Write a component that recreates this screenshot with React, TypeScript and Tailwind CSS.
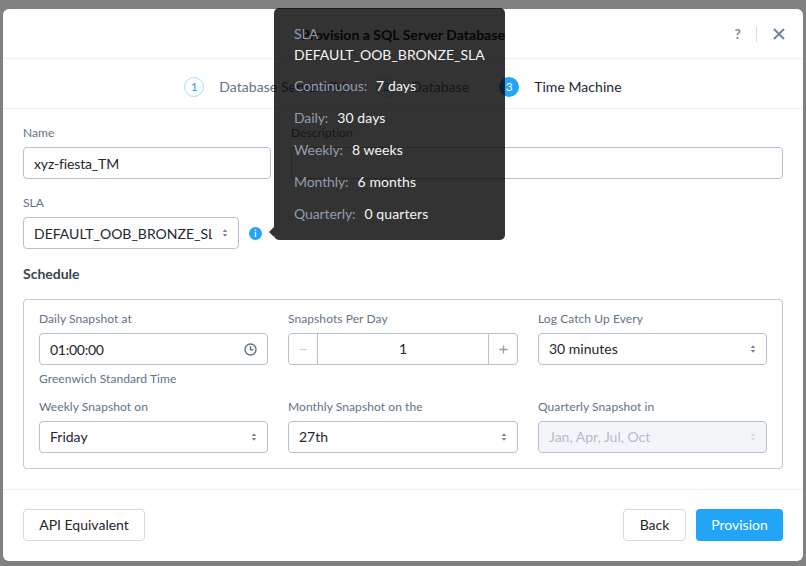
import React from "react";

const Updown = ({ light = false }: { light?: boolean }) => (
  <svg width="6" height="10" viewBox="0 0 6 10" className="shrink-0">
    <path d="M3 1.2 L5.3 4 H0.7 Z M3 8.8 L0.7 6 H5.3 Z" fill={light ? "#d3d9e2" : "#76849a"} />
  </svg>
);

const Label = ({ children }: { children: React.ReactNode }) => (
  <div className="text-[12px] leading-[14px] text-[#627386] tracking-[0.08px]">{children}</div>
);

const Select = ({ value, disabled = false }: { value: string; disabled?: boolean }) => (
  <div
    className={`mt-[7px] flex h-[32px] items-center justify-between rounded-[4px] border border-[#b9c0d0] pl-[10px] pr-[10px] text-[14px] ${
      disabled ? "bg-[#f3f5f8] text-[#b4bdca]" : "bg-white text-[#22272e]"
    }`}
  >
    <span className="mb-[2px]">{value}</span>
    <Updown light={disabled} />
  </div>
);

const Step = ({ n, label, active = false }: { n: number; label: string; active?: boolean }) => (
  <div className="flex items-center gap-[15px]">
    <div
      className={`flex h-[20px] w-[20px] items-center justify-center rounded-full text-[12px] ${
        active ? "bg-[#22a5f7] text-white" : "border border-[#a8dcfc] text-[#22a5f7]"
      }`}
    >
      {n}
    </div>
    <span className={`text-[14px] tracking-[0.05px] ${active ? "text-[#22272e]" : "text-[#627386]"}`}>{label}</span>
  </div>
);

const Row = ({ k, v, first = false }: { k: string; v: string; first?: boolean }) => (
  <div className={`flex h-[18px] items-center gap-[9px] text-[14px] leading-[18px] ${first ? "mt-[13px]" : "mt-[14px]"}`}>
    <span className="text-[#8f9cad] tracking-[-0.1px]">{k}</span>
    <span className="text-[#f4f5f6] tracking-[0.1px]">{v}</span>
  </div>
);

export default function App() {
  return (
    <div className="h-[566px] w-[806px] overflow-hidden bg-[#808180] pl-[3px] pr-[3px] pt-[9px] font-['Lato',sans-serif] [font-variant-ligatures:none]">
      <div className="relative flex h-[552px] w-[800px] flex-col rounded-[6px] bg-white">
        <div className="relative flex h-[50px] shrink-0 items-center justify-center border-b border-[#eef0f3] pt-[1px] text-[14px] font-bold tracking-[0.03px] text-[#22272e]">
          Provision a SQL Server Database
          <div className="absolute right-[18px] top-[16px] flex items-center">
            <span className="pl-[1px] text-[14px] leading-[18px] font-bold text-[#7d8ca3]">?</span>
            <span className="ml-[15px] mr-[16px] h-[16px] w-px bg-[#d8dde5]" />
            <svg width="12" height="12" viewBox="0 0 12 12">
              <path d="M1 1 L11 11 M11 1 L1 11" stroke="#73859c" strokeWidth="2" />
            </svg>
          </div>
        </div>
        <div className="flex h-[50px] shrink-0 items-center justify-center gap-[30px] border-b border-[#eef0f3] pt-[6px]">
          <Step n={1} label="Database Server VM" />
          <Step n={2} label="Database" />
          <Step n={3} label="Time Machine" active />
        </div>
        <div className="flex flex-1 flex-col px-[20px] pt-[17px]">
          <div className="flex gap-[20px]">
            <div className="w-[248px]">
              <Label>Name</Label>
              <div className="mt-[7px] flex h-[32px] items-center rounded-[4px] border border-[#b9c0d0] px-[10px] text-[14px] tracking-[-0.15px] text-[#22272e]">
                xyz-fiesta_TM
              </div>
            </div>
            <div className="flex-1">
              <Label>Description</Label>
              <div className="mt-[7px] h-[32px] rounded-[4px] border border-[#b9c0d0]" />
            </div>
          </div>
          <div className="mt-[17px]">
            <Label>SLA</Label>
            <div className="mt-[7px] flex items-center">
              <div className="flex h-[32px] w-[216px] items-center justify-between rounded-[4px] border border-[#b9c0d0] pl-[10px] pr-[10px] text-[14px] text-[#22272e]">
                <span className="w-[178px] overflow-hidden whitespace-nowrap">DEFAULT_OOB_BRONZE_SLA</span>
                <Updown />
              </div>
              <svg width="13" height="13" viewBox="0 0 13 13" className="ml-[10px]">
                <circle cx="6.5" cy="6.5" r="6.5" fill="#22a5f7" />
                <rect x="5.8" y="2.6" width="1.4" height="1.5" fill="#fff" />
                <rect x="5.8" y="5" width="1.4" height="5" fill="#fff" />
              </svg>
            </div>
          </div>
          <div className="mt-[17px] text-[14px] font-bold leading-[16px] text-[#3b4450]">Schedule</div>
          <div className="mt-[17px] h-[170px] rounded-[4px] border border-[#c3c9d5] px-[15px] pt-[12px]">
            <div className="grid grid-cols-[229px_230px_229px] gap-x-[20px]">
              <div>
                <Label>Daily Snapshot at</Label>
                <div className="mt-[7px] flex h-[32px] items-center justify-between rounded-[4px] border border-[#b9c0d0] pl-[10px] pr-[10px] text-[14px] text-[#22272e]">
                  <span className="tracking-[-0.25px]">01:00:00</span>
                  <svg width="13" height="13" viewBox="0 0 13 13" fill="none" stroke="#627386" strokeWidth="1.4">
                    <circle cx="6.5" cy="6.5" r="5.5" />
                    <path d="M6.5 3.2 V6.8 H9.4" />
                  </svg>
                </div>
                <div className="mt-[7px]"><Label>Greenwich Standard Time</Label></div>
              </div>
              <div>
                <Label>Snapshots Per Day</Label>
                <div className="mt-[7px] flex h-[32px] rounded-[4px] border border-[#b9c0d0] text-[14px] text-[#22272e]">
                  <div className="flex w-[29px] items-center justify-center border-r border-[#b9c0d0] text-[#c3cad5]">
                    <svg width="9" height="9" viewBox="0 0 9 9"><path d="M1 4.5 H8" stroke="#c8ced8" strokeWidth="1.2" /></svg>
                  </div>
                  <div className="flex flex-1 items-center justify-center pb-[2px]">1</div>
                  <div className="flex w-[29px] items-center justify-center border-l border-[#b9c0d0]">
                    <svg width="9" height="9" viewBox="0 0 9 9"><path d="M0.5 4.5 H8.5 M4.5 0.5 V8.5" stroke="#8f9cad" strokeWidth="1.3" /></svg>
                  </div>
                </div>
              </div>
              <div>
                <Label>Log Catch Up Every</Label>
                <Select value="30 minutes" />
              </div>
            </div>
            <div className="mt-[14px] grid grid-cols-[229px_230px_229px] gap-x-[20px]">
              <div>
                <Label>Weekly Snapshot on</Label>
                <Select value="Friday" />
              </div>
              <div>
                <Label>Monthly Snapshot on the</Label>
                <Select value="27th" />
              </div>
              <div>
                <Label>Quarterly Snapshot in</Label>
                <Select value="Jan, Apr, Jul, Oct" disabled />
              </div>
            </div>
          </div>
        </div>
        <div className="flex h-[72px] shrink-0 items-center justify-between border-t border-[#eef0f3] px-[20px] pb-[1px]">
          <button className="h-[32px] w-[122px] rounded-[4px] border border-[#d5dae2] bg-white pb-[2px] text-[14px] text-[#22272e]">
            API Equivalent
          </button>
          <div className="flex gap-[10px]">
            <button className="h-[32px] w-[63px] rounded-[4px] border border-[#d5dae2] bg-white pb-[2px] text-[14px] text-[#22272e]">
              Back
            </button>
            <button className="h-[32px] w-[87px] rounded-[4px] bg-[#22a5f7] pb-[2px] text-[14px] text-white">Provision</button>
          </div>
        </div>
        <div className="absolute left-[271px] top-[-1px] h-[232px] w-[231px] rounded-[5px] bg-[#000000cc] px-[20px] pt-[17px]">
          <div className="text-[14px] leading-[18px] text-[#8f9cad]">SLA</div>
          <div className="mt-[3px] text-[14px] leading-[18px] text-[#f4f5f6]">DEFAULT_OOB_BRONZE_SLA</div>
          <Row k="Continuous:" v="7 days" first />
          <Row k="Daily:" v="30 days" />
          <Row k="Weekly:" v="8 weeks" />
          <Row k="Monthly:" v="6 months" />
          <Row k="Quarterly:" v="0 quarters" />
          <div className="absolute left-[-5px] top-[219px] h-0 w-0 border-y-[5px] border-r-[5px] border-y-transparent border-r-[#333333]" />
        </div>
      </div>
    </div>
  );
}
